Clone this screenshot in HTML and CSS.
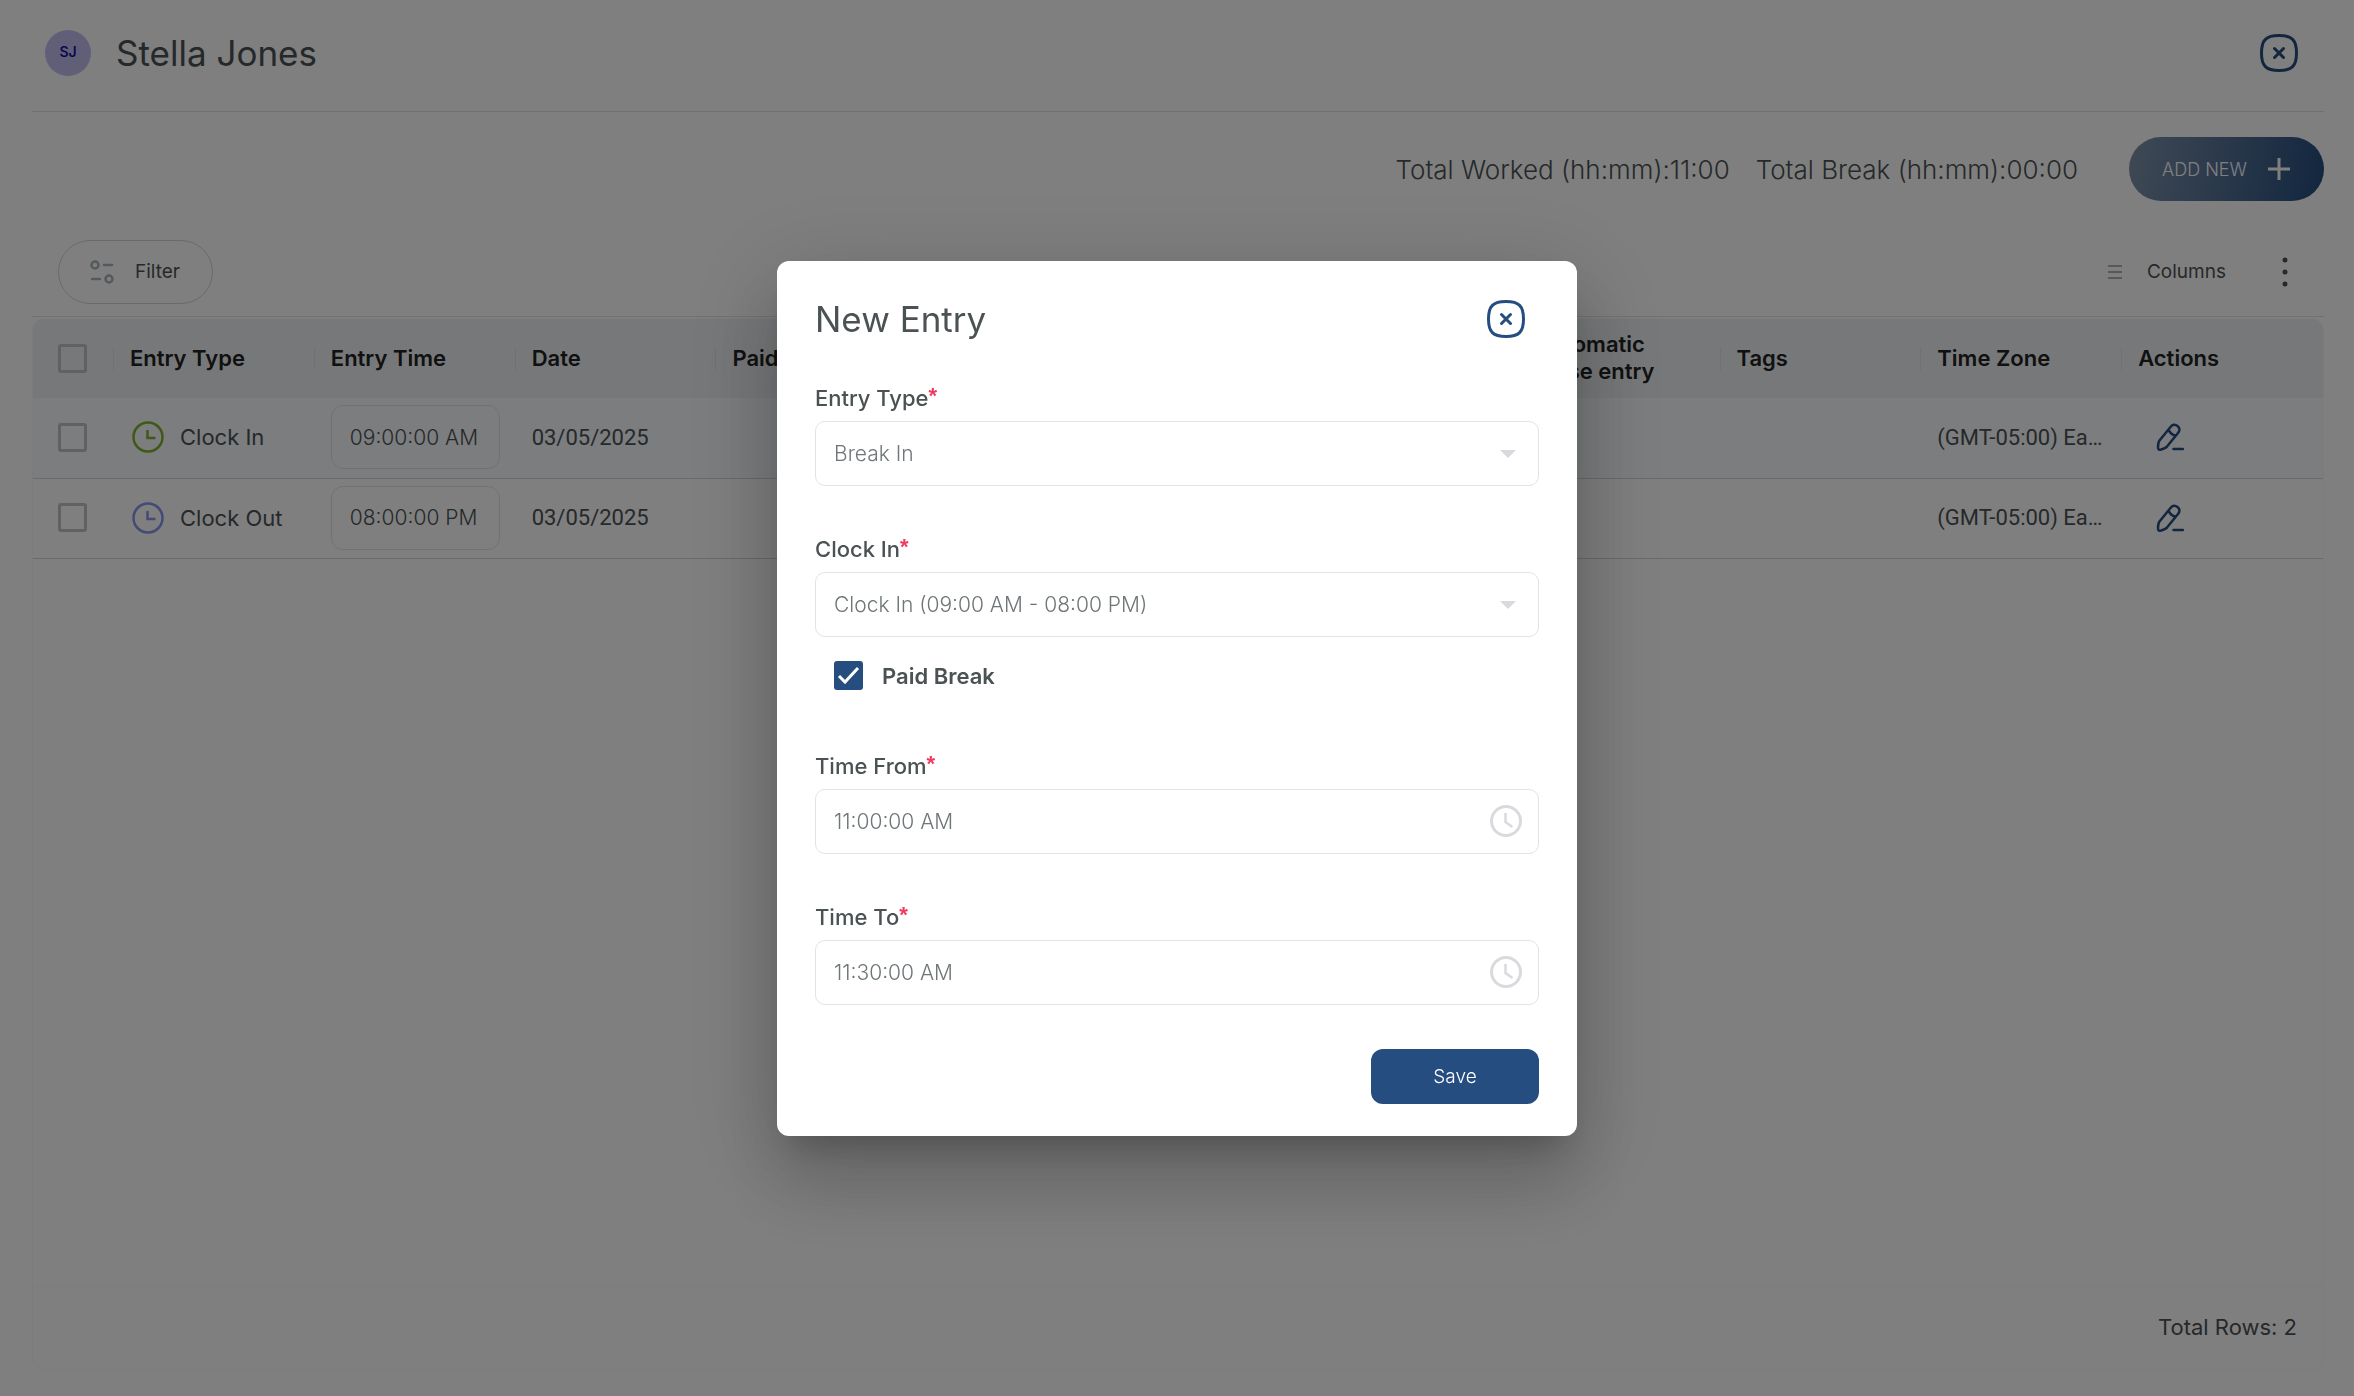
FILE: index.html
```html
<!DOCTYPE html>
<html lang="en">
<head>
    <meta charset="UTF-8">
    <meta name="viewport" content="width=device-width, initial-scale=1.0">
    <title>Time Entries</title>
    <link rel="stylesheet" href="styles.css">
</head>
<body>
    <!-- shared icons -->
    <svg class="sprite" aria-hidden="true">
        <symbol id="icon-close" viewBox="0 0 40 40">
            <path d="M20 2.500C33 2.500 37.500 7 37.500 20S33 37.500 20 37.500 2.500 33 2.500 20 7 2.500 20 2.500Z" fill="none" stroke="currentColor" stroke-width="3"/>
            <path d="M15.500 15.500l9 9M24.500 15.500l-9 9" stroke="currentColor" stroke-width="3" stroke-linecap="round"/>
        </symbol>
        <symbol id="icon-clock" viewBox="0 0 32 32">
            <circle cx="16" cy="16" r="14.500" fill="none" stroke="currentColor" stroke-width="2.500"/>
            <path d="M15.500 9v8h8" fill="none" stroke="currentColor" stroke-width="2.500"/>
        </symbol>
        <symbol id="icon-time" viewBox="0 0 32 32">
            <circle cx="16" cy="16" r="14.500" fill="none" stroke="currentColor" stroke-width="3"/>
            <path d="M15.500 8v9l7 5" fill="none" stroke="currentColor" stroke-width="2.500"/>
        </symbol>
        <symbol id="icon-edit" viewBox="0 0 28 28">
            <path d="M3.500 17.500L14.500 4C16.500 1.500 19 1 21.500 3S24 7.500 22 10L11 23.500C10 25 8.500 25.500 5 26.500 2.500 27 2 26.500 2 24 2 20.500 2.300 19 3.500 17.500ZM12.500 6.500C13.500 9.500 16 11.700 19 12.500M17.500 26H27" fill="none" stroke="currentColor" stroke-width="2.500" stroke-linecap="round" stroke-linejoin="round"/>
        </symbol>
    </svg>

    <div class="page">
        <header class="header">
            <span class="avatar">SJ</span>
            <h1>Stella Jones</h1>
            <button class="btn-close" aria-label="Close"><svg><use href="#icon-close"/></svg></button>
        </header>

        <div class="summary">
            <span>Total Worked (hh:mm):11:00</span>
            <span>Total Break (hh:mm):00:00</span>
            <button class="btn-add">ADD NEW
                <svg viewBox="0 0 24 24"><path d="M12 1v22M1 12h22" stroke="currentColor" stroke-width="3"/></svg>
            </button>
        </div>

        <div class="toolbar">
            <button class="btn-filter">
                <svg viewBox="0 0 24 24" fill="none" stroke="currentColor" stroke-width="2.500" stroke-linecap="round"><circle cx="5" cy="5" r="3.500"/><path d="M14 5h8M2 19h8"/><circle cx="19" cy="19" r="3.500"/></svg>
                Filter
            </button>
            <button class="btn-columns">
                <svg viewBox="0 0 14 16"><path d="M0 2h14M0 8h14M0 14h14" stroke="currentColor" stroke-width="2"/></svg>
                Columns
            </button>
            <button class="btn-more" aria-label="More">
                <svg viewBox="0 0 6 30" fill="currentColor"><circle cx="3" cy="3" r="2.500"/><circle cx="3" cy="15" r="2.500"/><circle cx="3" cy="27" r="2.500"/></svg>
            </button>
        </div>

        <div class="grid">
            <table>
                <thead>
                    <tr>
                        <th class="col-check"><input type="checkbox" class="checkbox" aria-label="Select all"></th>
                        <th>Entry Type</th>
                        <th>Entry Time</th>
                        <th>Date</th>
                        <th>Paid</th>
                        <th></th>
                        <th></th>
                        <th></th>
                        <th>Automatic close entry</th>
                        <th>Tags</th>
                        <th>Time Zone</th>
                        <th>Actions</th>
                    </tr>
                </thead>
                <tbody>
                    <tr class="selected">
                        <td class="col-check"><input type="checkbox" class="checkbox" aria-label="Select row"></td>
                        <td><span class="entry"><svg class="clock-in"><use href="#icon-clock"/></svg>Clock In</span></td>
                        <td class="col-time"><input type="text" class="time-box" value="09:00:00 AM" aria-label="Entry time"></td>
                        <td class="plain">03/05/2025</td>
                        <td></td>
                        <td></td>
                        <td></td>
                        <td></td>
                        <td></td>
                        <td></td>
                        <td class="plain zone">(GMT-05:00) Eastern Time</td>
                        <td><button class="btn-edit" aria-label="Edit"><svg><use href="#icon-edit"/></svg></button></td>
                    </tr>
                    <tr>
                        <td class="col-check"><input type="checkbox" class="checkbox" aria-label="Select row"></td>
                        <td><span class="entry"><svg class="clock-out"><use href="#icon-clock"/></svg>Clock Out</span></td>
                        <td class="col-time"><input type="text" class="time-box" value="08:00:00 PM" aria-label="Entry time"></td>
                        <td class="plain">03/05/2025</td>
                        <td></td>
                        <td></td>
                        <td></td>
                        <td></td>
                        <td></td>
                        <td></td>
                        <td class="plain zone">(GMT-05:00) Eastern Time</td>
                        <td><button class="btn-edit" aria-label="Edit"><svg><use href="#icon-edit"/></svg></button></td>
                    </tr>
                </tbody>
            </table>
            <footer class="grid-footer">Total Rows: 2</footer>
        </div>
    </div>

    <div class="overlay">
        <form class="modal">
            <div class="modal-header">
                <h2>New Entry</h2>
                <button type="button" class="btn-close" aria-label="Close"><svg><use href="#icon-close"/></svg></button>
            </div>

            <div class="form-group">
                <label for="entryType">Entry Type<span class="required">*</span></label>
                <div class="control">
                    <select id="entryType" class="form-input"><option>Break In</option></select>
                    <svg class="arrow" viewBox="0 0 16 8"><path d="M0 0h16L8 8z" fill="currentColor"/></svg>
                </div>
            </div>

            <div class="form-group">
                <label for="clockIn">Clock In<span class="required">*</span></label>
                <div class="control">
                    <select id="clockIn" class="form-input"><option>Clock In (09:00 AM - 08:00 PM)</option></select>
                    <svg class="arrow" viewBox="0 0 16 8"><path d="M0 0h16L8 8z" fill="currentColor"/></svg>
                </div>
                <label class="check-row"><input type="checkbox" class="checkbox" checked>Paid Break</label>
            </div>

            <div class="form-group">
                <label for="timeFrom">Time From<span class="required">*</span></label>
                <div class="control">
                    <input type="text" id="timeFrom" class="form-input" value="11:00:00 AM">
                    <svg class="time-icon"><use href="#icon-time"/></svg>
                </div>
            </div>

            <div class="form-group">
                <label for="timeTo">Time To<span class="required">*</span></label>
                <div class="control">
                    <input type="text" id="timeTo" class="form-input" value="11:30:00 AM">
                    <svg class="time-icon"><use href="#icon-time"/></svg>
                </div>
            </div>

            <button type="button" class="btn-save">Save</button>
        </form>
    </div>
</body>
</html>
```

FILE: styles.css
```css
:root {
    --primary-color: #254d7f;
    --text: #4b5254;
    --muted: #6f7678;
    --border: #dfe4e8;
}

* {
    box-sizing: border-box;
}

body {
    margin: 0;
    font-family: Inter, 'Noto Sans', sans-serif;
    font-size: 22px;
    color: var(--text);
    background: white;
}

button,
input,
select {
    font: inherit;
    color: inherit;
}

button {
    padding: 0;
    border: none;
    background: none;
}

svg {
    display: block;
    flex: none;
}

.sprite {
    position: absolute;
    width: 0;
    height: 0;
}

.page {
    display: flex;
    flex-direction: column;
    min-height: 100vh;
    padding: 0 30px 26px 32px;
}

.header {
    display: flex;
    align-items: center;
    gap: 25px;
    height: 112px;
    padding: 0 25px 5px 13px;
    border-bottom: 1px solid var(--border);
}

.avatar {
    width: 46px;
    height: 46px;
    border-radius: 50%;
    background: #c3bff0;
    color: #1d0f9c;
    font-size: 14px;
    font-weight: 600;
    line-height: 44px;
    text-align: center;
}

h1,
h2 {
    margin: 0;
    font-size: 35px;
    font-weight: 400;
}

.btn-close {
    margin-left: auto;
    color: var(--primary-color);
}

.btn-close svg {
    width: 40px;
    height: 40px;
}

.summary {
    display: flex;
    justify-content: flex-end;
    align-items: center;
    gap: 26px;
    padding-top: 25px;
    font-size: 26px;
    font-weight: 300;
}

.btn-add {
    display: flex;
    align-items: center;
    justify-content: center;
    gap: 20px;
    width: 195px;
    height: 64px;
    margin-left: 25px;
    border-radius: 32px;
    background: linear-gradient(100deg, #8093ab, var(--primary-color));
    color: white;
    font-size: 18px;
    font-weight: 300;
}

.btn-add svg {
    width: 24px;
    height: 24px;
}

.toolbar {
    display: flex;
    align-items: center;
    height: 116px;
    padding: 26px 36px 0 26px;
    border-bottom: 1px solid var(--border);
    font-size: 19px;
}

.btn-filter {
    display: flex;
    align-items: center;
    gap: 21px;
    height: 64px;
    padding: 0 32px 0 31px;
    border: 1px solid #ced7dc;
    border-radius: 32px;
}

.btn-filter svg {
    width: 24px;
    height: 24px;
    color: #a9b3ba;
}

.btn-columns {
    display: flex;
    align-items: center;
    gap: 25px;
    margin-left: auto;
}

.btn-columns svg {
    width: 14px;
    height: 16px;
    color: #a9b3ba;
}

.btn-more {
    margin-left: 56px;
}

.btn-more svg {
    width: 6px;
    height: 30px;
}

.grid {
    display: flex;
    flex: 1;
    flex-direction: column;
    margin-top: 1px;
    border: 1px solid #f8f8f8;
    border-radius: 12px;
    overflow: hidden;
}

table {
    width: 100%;
    table-layout: fixed;
    border-collapse: collapse;
}

th,
td {
    padding: 0 16px 1px;
    text-align: left;
}

th {
    position: relative;
    height: 79px;
    background: #eff1f4;
    color: #222;
    font-weight: 600;
    line-height: 27px;
}

/* column divider */
th:not(:last-child)::after {
    content: "";
    position: absolute;
    right: -1px;
    top: 28px;
    width: 2px;
    height: 23px;
    background: #e0e3e5;
}

td {
    height: 80px;
    border-bottom: 1px solid #d0d4d7;
}

.selected td {
    background: #f8fafd;
}

th.col-check,
td.col-check {
    width: 81px;
    padding: 0 0 1px 25px;
}

.checkbox {
    display: block;
    width: 29px;
    height: 29px;
    margin: 0;
    appearance: none;
    border: 3px solid #bfc2c4;
    border-radius: 3px;
}

.checkbox:checked {
    border-color: var(--primary-color);
    background: var(--primary-color) url('data:image/svg+xml,<svg xmlns="http://www.w3.org/2000/svg" viewBox="0 0 23 23"><path d="M2 12l6 6L21 4" fill="none" stroke="white" stroke-width="3"/></svg>') center / 23px no-repeat;
}

.entry {
    display: flex;
    align-items: center;
    gap: 16px;
    padding-left: 2px;
}

.entry svg {
    width: 32px;
    height: 32px;
}

.clock-in {
    color: #7fb32e;
}

.clock-out {
    color: #8795ea;
}

.time-box {
    display: block;
    width: 100%;
    height: 64px;
    padding: 0 8px 0 18px;
    border: 1px solid var(--border);
    border-radius: 12px;
    background: none;
    font-size: 21px;
    font-weight: 300;
}

.plain {
    font-family: Roboto, sans-serif;
}

.zone {
    overflow: hidden;
    text-overflow: ellipsis;
    white-space: nowrap;
}

.btn-edit {
    display: block;
    margin-left: 18px;
    color: var(--primary-color);
}

.btn-edit svg {
    width: 28px;
    height: 28px;
}

.grid-footer {
    margin-top: auto;
    padding: 26px 26px 28px;
    border-top: 1px solid #f8f8f8;
    line-height: 28px;
    text-align: right;
}

.overlay {
    position: fixed;
    inset: 0;
    display: flex;
    align-items: center;
    justify-content: center;
    background: rgba(0, 0, 0, 0.5);
}

.modal {
    width: 800px;
    padding: 38px 38px 32px;
    border-radius: 12px;
    background: white;
    box-shadow: 0 22px 30px -14px rgba(0, 0, 0, 0.2), 0 48px 76px 6px rgba(0, 0, 0, 0.14), 0 18px 92px 16px rgba(0, 0, 0, 0.12);
}

.modal-header {
    display: flex;
    align-items: center;
    height: 40px;
    margin-bottom: 44px;
    padding-right: 13px;
}

.form-group {
    margin-bottom: 48px;
}

.form-group label {
    display: block;
    margin-bottom: 8px;
    font-weight: 500;
    line-height: 30px;
}

.required {
    color: #f03a5f;
    font-family: 'Liberation Sans', sans-serif;
    font-weight: 700;
    line-height: 1;
    vertical-align: 3px;
}

.control {
    position: relative;
}

.form-input {
    display: block;
    width: 100%;
    height: 65px;
    padding: 0 18px;
    appearance: none;
    border: 1px solid var(--border);
    border-radius: 10px;
    background: white;
    color: var(--muted);
    font-size: 21px;
    font-weight: 300;
}

.arrow {
    position: absolute;
    right: 23px;
    top: 29px;
    width: 16px;
    height: 8px;
    color: #d8dade;
}

.time-icon {
    position: absolute;
    right: 17px;
    top: 16px;
    width: 32px;
    height: 32px;
    color: #d8dade;
}

.form-group .check-row {
    display: flex;
    align-items: center;
    gap: 19px;
    margin: 24px 0 60px 19px;
    font-weight: 600;
}

.btn-save {
    display: block;
    width: 168px;
    height: 55px;
    margin: -4px 0 0 auto;
    border-radius: 12px;
    background: var(--primary-color);
    color: white;
    font-size: 19px;
    font-weight: 300;
}
```
